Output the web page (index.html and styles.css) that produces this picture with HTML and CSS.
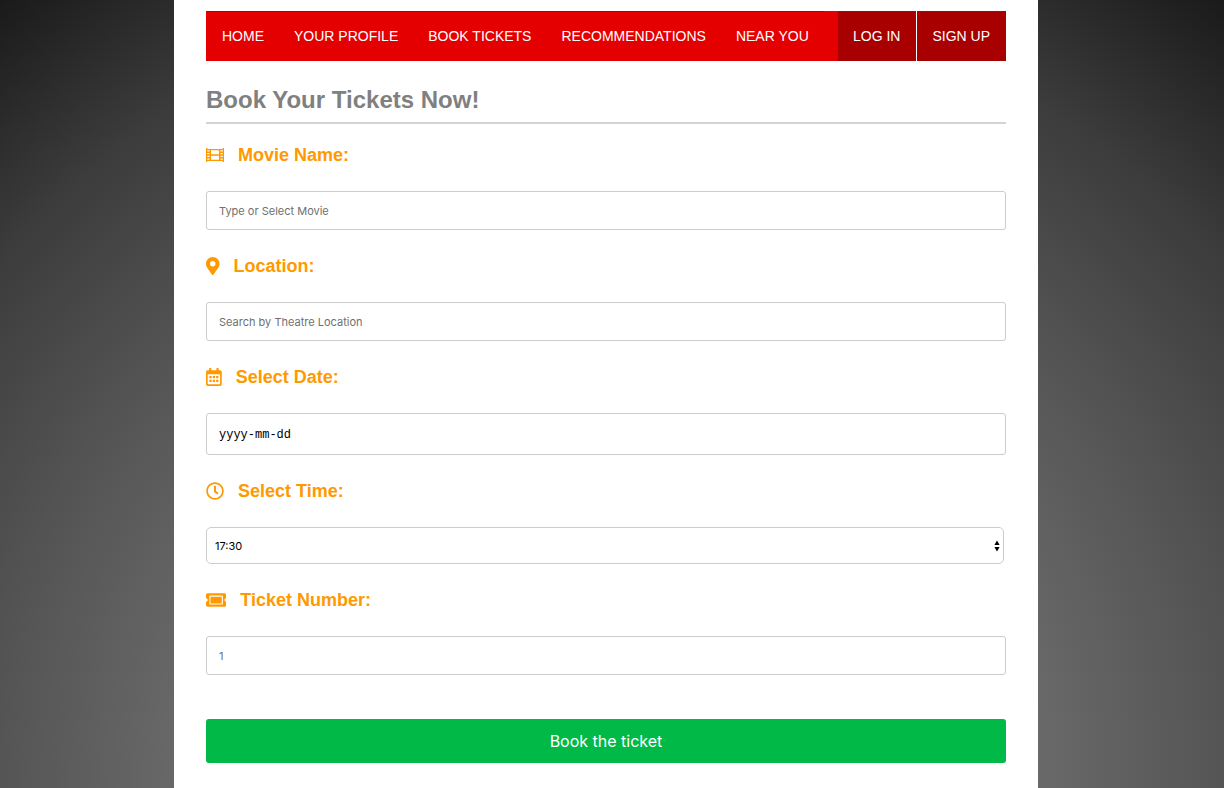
FILE: index.html
```
<!DOCTYPE html>
<html lang="en">
<head>
<meta charset="utf-8">
<meta name="viewport" content="width=device-width, initial-scale=1">
<title>Book Your Tickets</title>
<link rel="stylesheet" href="styles.css">
</head>
<body>
<div class="page">
  <nav class="nav">
    <a class="nav-link" href="#">HOME</a>
    <a class="nav-link" href="#">YOUR PROFILE</a>
    <a class="nav-link" href="#">BOOK TICKETS</a>
    <a class="nav-link" href="#">RECOMMENDATIONS</a>
    <a class="nav-link" href="#">NEAR YOU</a>
    <div class="account">
      <a class="nav-link account-link" href="#">LOG IN</a>
      <a class="nav-link account-link" href="#">SIGN UP</a>
    </div>
  </nav>
  <main>
    <h1 class="title">Book Your Tickets Now!</h1>
    <form class="form">
      <div class="field">
        <label class="label" for="movie">
          <svg class="icon" viewBox="0 0 512 512" aria-hidden="true"><path fill-rule="evenodd" d="M0 56H36V84H476V56H512V456H476V428H36V456H0ZM144 124V236H368V124ZM144 276V388H368V276ZM36 118V156H100V118ZM36 196V236H100V196ZM36 276V316H100V276ZM36 356V394H100V356ZM412 118V156H476V118ZM412 196V236H476V196ZM412 276V316H476V276ZM412 356V394H476V356Z"/></svg>
          <span>Movie Name:</span>
        </label>
        <input class="control" id="movie" type="text" placeholder="Type or Select Movie">
      </div>
      <div class="field">
        <label class="label" for="location">
          <svg class="icon" viewBox="0 0 384 512" aria-hidden="true"><path d="M172.268 501.67C26.97 291.031 0 269.413 0 192 0 85.961 85.961 0 192 0s192 85.961 192 192c0 77.413-26.97 99.031-172.268 309.67-9.535 13.774-29.93 13.773-39.464 0zM192 272c44.183 0 80-35.817 80-80s-35.817-80-80-80-80 35.817-80 80 35.817 80 80 80z"/></svg>
          <span>Location:</span>
        </label>
        <input class="control" id="location" type="text" placeholder="Search by Theatre Location">
      </div>
      <div class="field">
        <label class="label" for="date">
          <svg class="icon" viewBox="0 0 448 512" aria-hidden="true"><path fill-rule="evenodd" d="M48 64H88V12Q88 0 100 0H140Q152 0 152 12V64H296V12Q296 0 308 0H348Q360 0 360 12V64H400Q448 64 448 112V464Q448 512 400 512H48Q0 512 0 464V112Q0 64 48 64ZM48 176V464H400V176Z"/><path d="M96 228h64v60h-64zM192 228h64v60h-64zM288 228h64v60h-64zM96 336h64v60h-64zM192 336h64v60h-64zM288 336h64v60h-64z"/></svg>
          <span>Select Date:</span>
        </label>
        <input class="control control-date" id="date" type="text" placeholder="yyyy-mm-dd">
      </div>
      <div class="field">
        <label class="label" for="time">
          <svg class="icon" viewBox="0 0 512 512" aria-hidden="true"><path d="M256 8C119 8 8 119 8 256s111 248 248 248 248-111 248-248S393 8 256 8zm0 448c-110.5 0-200-89.5-200-200S145.5 56 256 56s200 89.5 200 200-89.5 200-200 200zm61.8-104.4l-84.9-61.7c-3.1-2.3-4.9-5.9-4.9-9.7V116c0-6.6 5.4-12 12-12h32c6.6 0 12 5.4 12 12v141.7l66.8 48.6c5.4 3.9 6.5 11.4 2.6 16.8L334.6 349c-3.9 5.3-11.4 6.5-16.8 2.6z"/></svg>
          <span>Select Time:</span>
        </label>
        <div class="select-wrap">
          <select class="control control-select" id="time"><option>17:30</option></select>
          <svg class="arrows" viewBox="0 0 6 12" aria-hidden="true"><path d="M3 0.5L5.6 5H0.4zM3 11.5L0.4 7H5.6z"/></svg>
        </div>
      </div>
      <div class="field">
        <label class="label" for="tickets">
          <svg class="icon" viewBox="0 0 576 512" aria-hidden="true"><path d="M128 160h320v192H128V160zm400 96c0 26.51 21.49 48 48 48v96c0 26.51-21.49 48-48 48H48c-26.51 0-48-21.49-48-48v-96c26.51 0 48-21.49 48-48s-21.49-48-48-48v-96c0-26.51 21.49-48 48-48h480c26.51 0 48 21.49 48 48v96c-26.51 0-48 21.49-48 48zm-48-104c0-13.255-10.745-24-24-24H120c-13.255 0-24 10.745-24 24v208c0 13.255 10.745 24 24 24h336c13.255 0 24-10.745 24-24V152z"/></svg>
          <span>Ticket Number:</span>
        </label>
        <input class="control control-number" id="tickets" type="text" inputmode="numeric" placeholder="1">
      </div>
      <button class="submit" type="submit">Book the ticket</button>
    </form>
  </main>
</div>
</body>
</html>
```
FILE: styles.css
```
* {
  box-sizing: border-box;
}

body {
  min-height: 100vh;
  margin: 0;
  padding-right: 12px;
  display: flex;
  justify-content: center;
  font-family: "Liberation Sans", Arial, sans-serif;
  background: radial-gradient(circle farthest-corner at 50% 100%, #909090 0%, #696969 43%, #555555 61%, #3c3c3c 81%, #1a1a1a 100%);
}

.page {
  width: 100%;
  max-width: 864px;
  padding: 11px 32px 25px;
  background: #ffffff;
}

.nav {
  display: flex;
  padding-left: 1px;
  background: #e40000;
}

.nav-link {
  padding: 0 15px;
  border-top: 1px solid #133a7c;
  font-size: 14px;
  line-height: 49px;
  color: #ffffff;
  text-decoration: none;
  white-space: nowrap;
}

.account {
  display: flex;
  gap: 1px;
  margin-left: auto;
  background: #ffffff;
}

.account-link {
  padding: 0 16px 0 15px;
  background: #a80000;
}

.title {
  margin: 25px 0 20px;
  padding-bottom: 8px;
  border-bottom: 2px solid #d3d3d3;
  font-size: 24px;
  line-height: 28px;
  color: #808080;
}

.form {
  display: flex;
  flex-direction: column;
  gap: 25px;
}

.field {
  display: flex;
  flex-direction: column;
  gap: 25px;
}

.label {
  display: flex;
  align-items: center;
  gap: 14px;
  font-size: 18px;
  font-weight: bold;
  line-height: 22px;
  color: #ff9900;
}

.icon {
  height: 18px;
  fill: currentColor;
}

.control {
  width: 100%;
  height: 39px;
  padding: 0 12px;
  border: 1px solid #cccccc;
  border-radius: 3px;
  background: #ffffff;
  font-family: Inter, sans-serif;
  font-size: 11px;
  color: #000000;
}

.control::placeholder {
  color: #707070;
  opacity: 1;
}

.control-date {
  height: 42px;
  padding-top: 2px;
  font-family: "Liberation Mono", monospace;
  font-size: 12px;
}

.control-date::placeholder {
  color: #000000;
}

.control-number::placeholder {
  color: #6c6c90;
}

.select-wrap {
  position: relative;
  display: flex;
  margin-right: 2px;
}

.control-select {
  height: 37px;
  padding: 0 8px;
  border-radius: 5px;
  appearance: none;
}

.arrows {
  position: absolute;
  top: 13px;
  right: 4px;
  width: 6px;
  height: 12px;
  pointer-events: none;
}

.submit {
  height: 44px;
  margin-top: 19px;
  border: 0;
  border-radius: 3px;
  background: #00b946;
  font-family: Inter, sans-serif;
  font-size: 16px;
  color: #ffffff;
}
```
